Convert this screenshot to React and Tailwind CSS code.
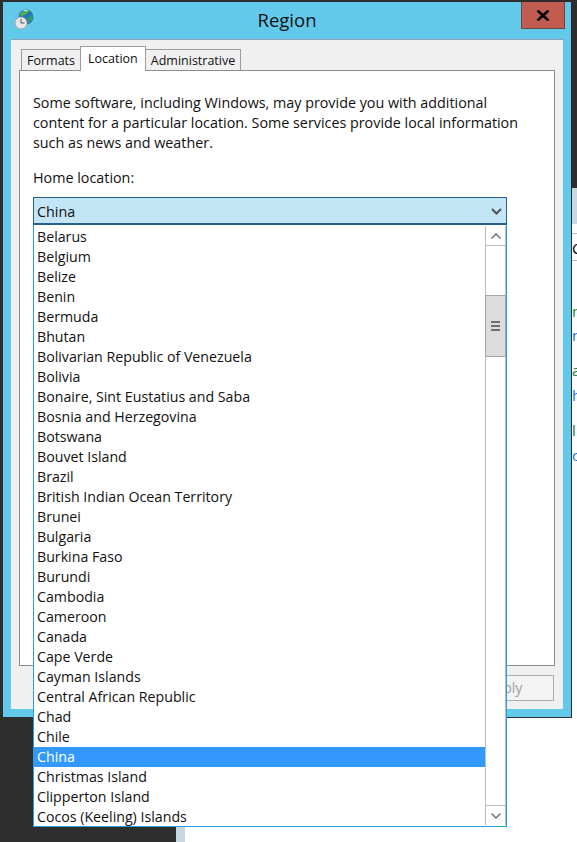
const countries = [
  "Belarus",
  "Belgium",
  "Belize",
  "Benin",
  "Bermuda",
  "Bhutan",
  "Bolivarian Republic of Venezuela",
  "Bolivia",
  "Bonaire, Sint Eustatius and Saba",
  "Bosnia and Herzegovina",
  "Botswana",
  "Bouvet Island",
  "Brazil",
  "British Indian Ocean Territory",
  "Brunei",
  "Bulgaria",
  "Burkina Faso",
  "Burundi",
  "Cambodia",
  "Cameroon",
  "Canada",
  "Cape Verde",
  "Cayman Islands",
  "Central African Republic",
  "Chad",
  "Chile",
  "China",
  "Christmas Island",
  "Clipperton Island",
  "Cocos (Keeling) Islands",
];

// little globe + clock in the title bar
function RegionIcon() {
  return (
    <svg width="22" height="22" viewBox="0 0 22 22" className="absolute left-[10px] top-[6px]">
      <circle cx="13" cy="9" r="7.5" fill="#2474c0" />
      <path d="M7 6c2-3 6-5 9-4 1 2-1 3-3 4-1 2-3 1-4 2-1 0-2 0-2-2z" fill="#4fb04a" />
      <path d="M15 9c2-1 4-2 5-1 0 3-2 6-4 7-1-2-2-4-1-6z" fill="#2f9a6a" />
      <path d="M10 2.5c1-1 4-1 5 0-1 1-4 1-5 0z" fill="#a8dff2" />
      <circle cx="8" cy="15" r="6" fill="#e6e6e6" stroke="#a8a8a8" strokeWidth="1" />
      <path d="M8 11V15H11.5" fill="none" stroke="#555" strokeWidth="1" />
    </svg>
  );
}

function Tab({ label, active }) {
  if (active) {
    return (
      <div className="relative z-10 h-[25px] -mb-px -mx-px px-[7px] pt-[3px] bg-white border border-b-0 border-[#9a9aa2] text-[12.5px] leading-[18px]">
        {label}
      </div>
    );
  }
  return (
    <div className="h-[21px] px-[5px] bg-[#f0f0f0] border border-b-0 border-[#9a9aa2] text-[12.5px] leading-[21px]">
      {label}
    </div>
  );
}

export default function App() {
  return (
    <div className="relative w-[577px] h-[842px] overflow-hidden bg-white font-['Open_Sans',Arial,sans-serif] text-[#111]">
      {/* desktop behind the dialog */}
      <div className="absolute left-0 top-0 w-[176px] h-[842px] bg-[#2d2d2d]" />
      <div className="absolute left-[176px] top-0 w-[401px] h-[2px] bg-[#2d2d2d]" />
      <div className="absolute left-[176px] top-[700px] w-[9px] h-[142px] bg-[#c8d8e0]" />
      <div className="absolute left-[572px] top-0 w-[5px] h-[188px] bg-[#2d2d2d]" />
      <div className="absolute left-[572px] top-[188px] w-[5px] h-[36px] bg-[#c8d8e0]" />
      <div className="absolute left-[572px] top-[233px] w-[5px] h-px bg-[#bbb]" />
      <div className="absolute left-[572px] top-[260px] w-[5px] h-px bg-[#bbb]" />
      <span className="absolute left-[572px] top-[238px] text-[15px] leading-[20px] text-black">C</span>
      <span className="absolute left-[572px] top-[301px] text-[15px] leading-[20px] text-[#1f8a3a]">n</span>
      <span className="absolute left-[572px] top-[325px] text-[15px] leading-[20px] text-[#1a6fe0]">n</span>
      <span className="absolute left-[572px] top-[360px] text-[15px] leading-[20px] text-[#1f7a3a]">a</span>
      <span className="absolute left-[572px] top-[385px] text-[15px] leading-[20px] text-[#1a6fe0]">h</span>
      <span className="absolute left-[572px] top-[420px] text-[15px] leading-[20px] text-[#1f6a3a]">l</span>
      <span className="absolute left-[572px] top-[445px] text-[15px] leading-[20px] text-[#1a6fe0]">c</span>

      {/* dialog window */}
      <div className="absolute left-[3px] top-[2px] w-[569px] h-[716px] bg-[#63c9eb] border-r border-b border-[#2d2d2d] flex flex-col">
        <RegionIcon />
        <div className="h-[37px] shrink-0 text-center text-[18.5px] leading-[35px]">Region</div>
        <button className="absolute right-[6px] top-0 w-[44px] h-[27px] bg-[#c25b50] border border-t-0 border-[#6b4540] flex items-center justify-center">
          <svg width="14" height="11" viewBox="0 0 14 11">
            <path d="M1.5 0.5L12.5 10.5M12.5 0.5L1.5 10.5" stroke="#000" strokeWidth="2.6" />
          </svg>
        </button>

        <div className="mx-2 mb-2 flex-1 bg-[#f0f0f0] border-t border-[#8fa3b5] flex flex-col px-2 pt-[9px]">
          <div className="flex items-end pl-[2px] h-[21px] ml-0">
            <Tab label="Formats" />
            <Tab label="Location" active />
            <Tab label="Administrative" />
          </div>
          <div className="h-[596px] bg-white border border-[#8c8c94] px-[13px] pt-[22px] text-[14.33px] leading-[20px]">
            <p>
              Some software, including Windows, may provide you with additional
              <br />
              content for a particular location. Some services provide local information
              <br />
              such as news and weather.
            </p>
            <p className="mt-[15px]">Home location:</p>
          </div>
          <div className="flex justify-end mt-[9px]">
            <div className="w-[100px] h-[26px] mr-px bg-[#f3f3f3] border border-[#adadad] text-[14px] leading-[24px] text-center text-[#a0a0a0]">
              Apply
            </div>
          </div>
        </div>
      </div>

      {/* open combo box, lies over the dialog */}
      <div className="absolute left-[33px] top-[197px] w-[474px] h-[28px] bg-[#c4e5f6] border border-b-2 border-[#26608f] flex items-center justify-between pl-[3px] pr-[4px] pt-[2px] text-[14.33px]">
        <span>China</span>
        <svg width="11" height="7" viewBox="0 0 11 7">
          <path d="M1 1L5.5 5.5L10 1" fill="none" stroke="#555" strokeWidth="2.2" />
        </svg>
      </div>
      <div className="absolute left-[33px] top-[225px] w-[474px] h-[602px] bg-white border border-t-0 border-[#26a0da] flex">
        <ul className="flex-1 pt-[2px] text-[14.2px] leading-[20px]">
          {countries.map((c) => (
            <li key={c} className={c === "China" ? "pl-[3px] bg-[#3399ff] text-white" : "pl-[3px]"}>
              {c}
            </li>
          ))}
        </ul>
        <div className="w-[21px] my-px border-x border-[#bdbdbd] flex flex-col">
          <div className="h-5 border-b border-[#bdbdbd] flex items-center justify-center">
            <svg width="10" height="6" viewBox="0 0 10 6">
              <path d="M0.5 5.5L5 1L9.5 5.5" fill="none" stroke="#666" strokeWidth="1.3" />
            </svg>
          </div>
          <div className="h-[49px]" />
          <div className="h-[62px] -mx-px bg-[#dcdcdc] border border-[#a6a6a6] flex flex-col items-center justify-center gap-[2px]">
            <div className="w-[9px] h-[2px] bg-[#707070]" />
            <div className="w-[9px] h-[2px] bg-[#707070]" />
            <div className="w-[9px] h-[2px] bg-[#707070]" />
          </div>
          <div className="flex-1" />
          <div className="h-5 border-t border-[#bdbdbd] flex items-center justify-center">
            <svg width="10" height="6" viewBox="0 0 10 6">
              <path d="M0.5 0.5L5 5L9.5 0.5" fill="none" stroke="#666" strokeWidth="1.3" />
            </svg>
          </div>
        </div>
      </div>
    </div>
  );
}
